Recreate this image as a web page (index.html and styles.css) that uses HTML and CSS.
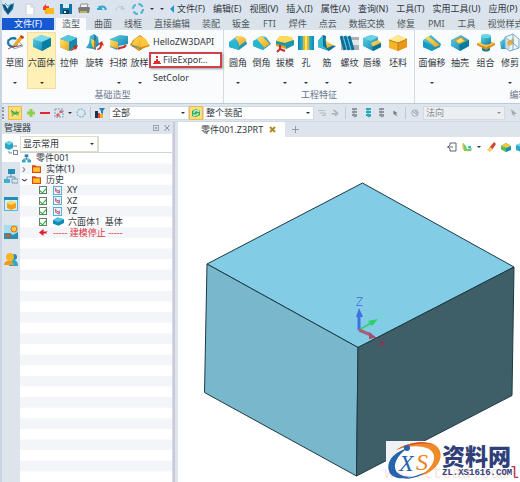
FILE: index.html
```html
<!DOCTYPE html>
<html lang="zh-CN">
<head>
<meta charset="utf-8">
<title>零件001.Z3PRT</title>
<link rel="stylesheet" href="styles.css">
</head>
<body>
<svg class="defs" aria-hidden="true">
  <defs>
    <linearGradient id="teal" x1="0" y1="0" x2="1" y2="1"><stop offset="0" stop-color="#5fd0e6"/><stop offset="1" stop-color="#0a7fa8"/></linearGradient>
    <linearGradient id="gold" x1="0" y1="0" x2="1" y2="1"><stop offset="0" stop-color="#ffe46a"/><stop offset="1" stop-color="#f0a019"/></linearGradient>
    <linearGradient id="bars" x1="0" x2="1"><stop offset="0" stop-color="#0a86b4"/><stop offset=".5" stop-color="#41d0ea"/><stop offset="1" stop-color="#0a86b4"/></linearGradient>
    <symbol id="plane" viewBox="0 0 10 10"><rect x=".5" y=".5" width="9" height="9" fill="#e8f7fd" stroke="#46a9d2"/><path d="M3 2v4l4 2V4M3 4l4 2" fill="none" stroke="#c0435a"/></symbol>
    <symbol id="folder" viewBox="0 0 8 8"><path d="M0 1h3l1 1h4v6H0z" fill="#d8481e"/><path d="M1 3h6v4H1z" fill="#ffc323"/></symbol>
    <symbol id="stack" viewBox="0 0 8 10"><path d="M1 1h5M1 4h5M1 7h5" stroke="currentColor" stroke-width="2"/><path d="M3 1v8l3-1" fill="none" stroke="currentColor"/></symbol>
  </defs>
</svg>
<div class="app">
  <header class="titlebar">
    <div class="quick">
      <svg class="logo" viewBox="0 0 12 14"><path d="M0 2l3 1 2 4 3-4 4-2-1 6-5 6-4-5z" fill="#1976a2"/><path d="M2 3l4 7 4-7" fill="none" stroke="#134c70" stroke-width="2"/><path d="M3 1l3 3 3-2" fill="none" stroke="#35b5d7"/></svg>
      <button aria-label="新建"><svg viewBox="0 0 12 12"><path d="M2 1h5l3 3v8H2z" fill="#fff" stroke="#c5ccd4"/><path d="M7 1v3h3" fill="none" stroke="#c5ccd4"/></svg></button>
      <button aria-label="打开"><svg viewBox="0 0 12 12"><path d="M2 4h4l1 1h5v6H3z" fill="#ffb81f"/><path d="M1 7V4l3-3v2h3v2H4v2z" fill="#e9471c"/></svg></button>
      <button aria-label="保存"><svg viewBox="0 0 12 12"><path d="M0 1h12v10H0z" fill="#1274a4"/><path d="M3 1h6v4H3z" fill="#d7f0f8"/><path d="M3 7h6v4H3z" fill="#103f5b"/><path d="M4 8h2v2H4z" fill="#d7f0f8"/></svg></button>
      <button aria-label="打印"><svg viewBox="0 0 12 12"><path d="M3 1h7L9 5H2z" fill="#f2f2ee" stroke="#8b8e8e"/><path d="M0 5l2-1h9l1 1-1 5H1z" fill="#777a78"/><path d="M2 8h7v2H2z" fill="#c4b25a"/></svg></button>
      <button aria-label="撤销"><svg viewBox="0 0 12 12"><path d="M1 6h4L3 3M2 6c3-4 7-3 8 1" fill="none" stroke="#2fa7cf" stroke-width="2"/></svg></button>
      <button aria-label="重做"><svg viewBox="0 0 12 12"><path d="M11 6H7l2-3m1 3C7 2 3 3 2 7" fill="none" stroke="#b6c3cc" stroke-width="1"/></svg></button>
      <button aria-label="刷新"><svg viewBox="0 0 12 12"><circle cx="6" cy="6" r="5" fill="none" stroke="#4bb2d6" stroke-width="2" stroke-dasharray="5 2.8"/></svg></button>
      <i class="caret"></i><i class="caret"></i>
      <svg class="back" viewBox="0 0 4 8"><path d="M4 0v8L0 4z" fill="#1d9bd1"/></svg>
    </div>
    <nav class="menus" aria-label="菜单">
      <button>文件(F)</button><button>编辑(E)</button><button>视图(V)</button><button>插入(I)</button><button>属性(A)</button><button>查询(N)</button><button>工具(T)</button><button>实用工具(U)</button><button>应用(P)</button>
    </nav>
  </header>
  <nav class="tabs" aria-label="功能区">
    <button class="file">文件(F)</button><button class="active">造型</button><button>曲面</button><button>线框</button><button>直接编辑</button><button>装配</button><button>钣金</button><button class="latin">FTI</button><button>焊件</button><button>点云</button><button>数据交换</button><button>修复</button><button class="latin">PMI</button><button>工具</button><button>视觉样式</button>
  </nav>
  <section class="ribbon">
    <div class="group shape">
      <div class="tools">
        <button><svg viewBox="0 0 20 20"><path d="M2 7l8-3 8 9-9 3z" fill="#e8f4fa" stroke="#8ab6cd"/><path d="M11 6C5 3 0 10 5 13c4 2 9-2 6-4" fill="none" stroke="#1675a5" stroke-width="2"/><path d="M3 16c4-3 10-2 14-4" fill="none" stroke="#c44537"/><path d="M8 12l8-10 3 2-8 9z" fill="#f5a81c"/><path d="M16 2l3 2-1 2-3-2z" fill="#c73628"/></svg><span>草图</span><i></i></button>
        <button class="picked"><svg viewBox="0 0 20 20"><path d="M1 6l8-4 10 3v8l-9 5-9-4z" fill="url(#teal)"/><path d="M1 6l8-4 10 3-9 4z" fill="#79dcee"/><path d="M10 9l9-4v8l-9 5z" fill="#087ea5"/></svg><span>六面体</span><i></i></button>
        <button><svg viewBox="0 0 20 20"><path d="M1 6l8-4 9 3v8l-8 5-9-4z" fill="#1289ae"/><path d="M1 6l8-4 9 3-8 4z" fill="#54c8dc"/><path d="M1 6l9 3v9l-9-4z" fill="url(#gold)"/><path d="M11 17l4-2-1-2 5-1-2 5-1-1-4 2z" fill="#c92c27"/></svg><span>拉伸</span><i class="none"></i></button>
        <button><svg viewBox="0 0 20 20"><path d="M5 3l4-2 4 3 1 8-5 4-8-1 3-5z" fill="url(#teal)"/><path d="M6 6l5 2v9l-4-4z" fill="url(#gold)"/><path d="M10 2v15" stroke="#225475"/><path d="M12 17c4 0 5-3 5-5l2 1-2-5-4 3 2 1c0 2-1 3-3 4z" fill="#d33126"/></svg><span>旋转</span><i class="none"></i></button>
        <button><svg viewBox="0 0 20 20"><path d="M1 6l10-4 8 1v8l-9 2-2 4-7-3z" fill="url(#teal)"/><path d="M1 7l8 2v7l-8-3z" fill="url(#gold)"/><path d="M9 16c3-3 6 0 8-4" fill="none" stroke="#c92c27" stroke-width="2"/></svg><span>扫掠</span><i></i></button>
        <button><svg viewBox="0 0 20 20"><path d="M0 12l3-5 7-5 5 4 5 7-6 2-5 3z" fill="#de8e16"/><path d="M2 11l3-5 5-3 3 6-4 7z" fill="url(#gold)"/><path d="M10 4c6 0 7 4 9 8l-8 2z" fill="#ffc73b"/><path d="M2 13l6 1 3 3" fill="none" stroke="#3192a8"/></svg><span>放样</span><i></i></button>
      </div>
      <div class="commands"><button>HelloZW3DAPI</button><button class="marked"><svg viewBox="0 0 8 8"><path d="M3 0h2v2H3zM3 3h2v2h2v2H1V5h2zM0 7h8v1H0z" fill="#d9312d"/></svg>FileExpor...</button><button>SetColor</button></div>
      <h2>基础造型</h2>
    </div>
    <div class="group feature">
      <div class="tools">
        <button><svg viewBox="0 0 20 20"><path d="M1 9l8-6 8 2 2 6-8 6-10-3z" fill="url(#teal)"/><path d="M7 5l3-2c5 0 8 2 8 5l-7 5c0-4-2-6-4-8z" fill="url(#gold)"/><path d="M1 9c6-2 10 1 10 8L1 14z" fill="#28b6cf"/></svg><span>圆角</span><i></i></button>
        <button><svg viewBox="0 0 20 20"><path d="M1 8l8-5 5 1 5 7-8 6-10-4z" fill="url(#teal)"/><path d="M5 6l5-3 8 8-6 4z" fill="url(#gold)"/><path d="M1 8l4-1 7 7-1 3-10-4z" fill="#28b6cf"/></svg><span>倒角</span><i class="none"></i></button>
        <button><svg viewBox="0 0 20 20"><path d="M1 8l4-5 12 1 2 8-8 4-10-3z" fill="#e99b18"/><path d="M1 8l4-5 12 1 1 3-8 3z" fill="#ffdc57"/><path d="M10 10l9-3v5l-8 4z" fill="#1596b5"/><path d="M1 8l9 2v3l-9-2z" fill="#1596b5"/><path d="M5 12v4l-3 3m3-3l5 2" fill="none" stroke="#c92c27" stroke-width="2"/></svg><span>拔模</span><i></i></button>
        <button><svg viewBox="0 0 20 20"><path d="M2 3h16v14H2z" fill="url(#bars)"/><path d="M7 3h6v14H7z" fill="#edb51f"/><path d="M9 3h2v14H9z" fill="#ffea61"/></svg><span>孔</span><i></i></button>
        <button><svg viewBox="0 0 20 20"><path d="M1 8l5-6 3 1v8l10 2-7 5-11-4z" fill="#0b7499"/><path d="M1 8l5-6v11l5 4-10-3z" fill="#35bcd2"/><path d="M8 4c1 5 5 7 9 8l-7 3z" fill="url(#gold)"/></svg><span>筋</span><i></i></button>
        <button><svg viewBox="0 0 20 20"><path d="M1 4h18v13H1z" fill="#a7b1b6"/><path d="M10 7h9v5h-9z" fill="#e3e8ea"/><path d="M1 3l4 14M5 3l4 14M9 3l4 14" stroke="#0c6e9a" stroke-width="3"/><path d="M3 3l4 14M7 3l4 14" stroke="#4cc5e0"/></svg><span>螺纹</span><i></i></button>
        <button><svg viewBox="0 0 20 20"><path d="M1 5l8-3 7 2v4l3 2v4l-8 4-10-5z" fill="url(#teal)"/><path d="M1 5l8-3 7 2-7 4z" fill="#67d3e3"/><path d="M9 10l7-3 3 3-8 4z" fill="url(#gold)"/><path d="M10 14l9-4v4l-8 4z" fill="#087295"/></svg><span>唇缘</span><i class="none"></i></button>
        <button><svg viewBox="0 0 20 20"><path d="M1 7l9-5 9 4v8l-9 4-9-3z" fill="#f4b528"/><path d="M1 7l9-5 9 4-9 4z" fill="#ffe98d"/><path d="M10 10l9-4v8l-9 4z" fill="#e9961b"/><path d="M1 7l9 3 9-4M10 10v8" fill="none" stroke="#c77b12"/></svg><span>坯料</span><i class="none"></i></button>
      </div>
      <h2>工程特征</h2>
    </div>
    <div class="group edit">
      <div class="tools">
        <button><svg viewBox="0 0 20 20"><path d="M1 7l8-5 10 9-1 3-8 4-9-4z" fill="url(#teal)"/><path d="M3 5l3-2 12 9-5 2z" fill="url(#gold)"/><path d="M1 8l11 6-2 4-9-4z" fill="#159ac1"/></svg><span>面偏移</span><i></i></button>
        <button><svg viewBox="0 0 20 20"><path d="M1 7l10-5 8 5v6l-9 5-9-5z" fill="url(#teal)"/><path d="M4 7l7-3 5 4-7 3z" fill="#e6991b"/><path d="M6 8l5-3 3 3-5 2z" fill="#ffe06c"/><path d="M9 12l10-5v6l-9 5z" fill="#087ba1"/></svg><span>抽壳</span><i class="none"></i></button>
        <button><svg viewBox="0 0 20 20"><path d="M6 11h8v6c-2 2-6 2-8 0z" fill="#087ba1"/><path d="M1 10l9-3 9 3-9 5z" fill="url(#gold)"/><path d="M1 10l9 5 9-5v2l-9 5-9-5z" fill="#dc8918"/><path d="M5 3h10v7c-2 2-8 2-10 0z" fill="url(#teal)"/><ellipse cx="10" cy="3" rx="5" ry="2" fill="#67d3e3"/></svg><span>组合</span><i class="none"></i></button>
        <button><svg viewBox="0 0 20 20"><path d="M0 9l5-4 5 3v8H1z" fill="url(#teal)"/><path d="M5 4l8-3 6 5v9l-9 3-5-3z" fill="#e6f3fa" fill-opacity=".8" stroke="#7babca"/><path d="M7 9l7-4v6l-6 2z" fill="#efad37"/><path d="M13 1v16M5 4l14 11" stroke="#88a7bd"/></svg><span>修剪</span><i></i></button>
      </div>
      <h2>编辑</h2>
    </div>
  </section>
  <section class="toolbar" aria-label="选择工具">
    <span class="grip"></span>
    <button class="hot" aria-label="拾取"><svg viewBox="0 0 10 10"><path d="M1 2l4 2 2-2v3l3-2-2 5-3-2-3 3z" fill="#78c63b"/><path d="M1 2l4 4 3-2" fill="none" stroke="#248d82"/></svg></button>
    <button aria-label="添加"><svg viewBox="0 0 10 10"><path d="M5 1v8M1 5h8" stroke="#8fd04a" stroke-width="3"/></svg></button>
    <button aria-label="移除"><svg viewBox="0 0 10 10"><path d="M0 5h10" stroke="#df2830" stroke-width="2"/></svg></button>
    <button aria-label="框选"><svg viewBox="0 0 10 10"><rect x="1" y="1" width="8" height="8" fill="none" stroke="#6e9fb8" stroke-dasharray="2 1"/><path d="M2 7h4M4 5v4M7 2v3M5 4h4" stroke="#d83f4b"/></svg></button>
    <i class="caret"></i>
    <button aria-label="圈选"><svg viewBox="0 0 10 10"><circle cx="5" cy="5" r="4" fill="none" stroke="#50a9cb" stroke-dasharray="2 1"/></svg></button>
    <span class="rule"></span>
    <button aria-label="过滤"><svg viewBox="0 0 10 10"><path d="M0 3h3v7H0z" fill="#16344d"/><path d="M3 5h2v5H3z" fill="#e44236"/><path d="M5 6h3v4H5z" fill="#f6ab21"/><path d="M4 0h6L8 3v3L6 5V3z" fill="#2382b8"/></svg></button>
    <label class="drop all"><select aria-label="过滤器"><option>全部</option></select></label>
    <button class="hot" aria-label="范围"><svg viewBox="0 0 10 10"><path d="M1 3l4-2 4 2v4L5 9 1 8z" fill="#35aa55"/><path d="M3 5c0-3 4-3 5-1M7 5c0 3-4 2-5 2" fill="none" stroke="#b8f2e1" stroke-width="1.5"/></svg></button>
    <label class="drop scope"><select aria-label="选择范围"><option>整个装配</option></select></label>
    <div class="dim">
      <svg viewBox="0 0 10 10"><path d="M0 2h9M2 5h7M5 8h4V5" fill="none" stroke="#a8b0b8"/></svg>
      <svg viewBox="0 0 10 10"><path d="M3 1l5 4-2 1v3M1 6h8" fill="none" stroke="#a8b0b8" stroke-width="2"/></svg>
      <span class="rule"></span>
      <svg viewBox="0 0 8 10"><use href="#stack"/></svg><svg class="lit" viewBox="0 0 8 10"><use href="#stack"/></svg><svg viewBox="0 0 8 10"><use href="#stack"/></svg>
      <svg viewBox="0 0 10 10"><path d="M3 2l5 3-2 1 2 3-2-1-3-2z" fill="#777f87"/></svg>
      <span class="rule"></span>
      <svg viewBox="0 0 10 10"><circle cx="5" cy="5" r="4" fill="none" stroke="#9ba4ab"/><path d="M2 3l6 4M5 2l3 3" stroke="#7e878f"/></svg>
    </div>
    <label class="drop off"><select aria-label="方向" disabled><option>法向</option></select></label>
    <svg class="tail" viewBox="0 0 10 10"><path d="M2 1l6 5-3 0 1 3-3-3z" fill="#a3abb3"/></svg>
  </section>
  <main class="work">
    <aside class="manager">
      <header><h1>管理器</h1><button aria-label="停靠"><svg viewBox="0 0 6 6"><rect x=".5" y=".5" width="5" height="5" fill="none" stroke="#9aa6b1"/><path d="M2 2h2v2H2z" fill="#9aa6b1"/></svg></button><button aria-label="关闭"><svg viewBox="0 0 6 6"><path d="M1 1l4 4M5 1L1 5M0 0h2M4 0h2M0 6h2M4 6h2" stroke="#8793a0"/></svg></button></header>
      <div class="body">
        <nav class="rail" aria-label="面板">
          <button class="on" aria-label="历史"><svg viewBox="0 0 14 16"><path d="M1 3l4-2 4 2v5L5 10 1 8z" fill="#27a7c8"/><path d="M1 3l4-2 4 2-4 2z" fill="#75d2e6"/><path d="M9 6h4M5 11v2h3" fill="none" stroke="#6d8b9d"/><rect x="9.500" y="10.500" width="4" height="4" fill="none" stroke="#6d8b9d"/></svg></button>
          <button aria-label="装配"><svg viewBox="0 0 14 16"><path d="M4 1h7v5H4z" fill="#208fba"/><path d="M7 6v3M3 11V9h8v2" fill="none" stroke="#5a8da8"/><path d="M0 11h6v4H0z" fill="#3ab2ce"/><path d="M8 11h6v4H8z" fill="#d9e7ef" stroke="#77a1b6"/></svg></button>
          <button aria-label="视图"><svg viewBox="0 0 14 16"><path d="M.5 1.500h13v13H.5z" fill="#d9eef7" stroke="#58b0d3"/><path d="M0 1h14v3H0z" fill="#1b91c0"/><path d="M3 7l4-2 5 2v5l-5 2-4-2z" fill="#f0a21d"/><path d="M3 7l4-2 5 2-5 2z" fill="#ffdc5f"/></svg></button>
          <button aria-label="视觉"><svg viewBox="0 0 14 16"><path d="M0 1h14v14H0z" fill="#a7dded"/><path d="M0 9h6l3 2 5-3v7H0z" fill="#2990b3"/><circle cx="10" cy="5" r="3" fill="#ffca36" stroke="#e06f22"/><path d="M1 11h3V9l4 3-4 2v-1H1z" fill="#b76531"/></svg></button>
          <button aria-label="角色"><svg viewBox="0 0 14 16"><circle cx="10" cy="5" r="3" fill="#1d8fbb"/><path d="M5 14c0-8 9-8 9 0z" fill="#2aa5cc"/><circle cx="6" cy="5" r="4" fill="#f5b629"/><path d="M0 13c0-5 9-6 10 0z" fill="#f09b1e"/></svg></button>
        </nav>
        <div class="panel">
          <div class="finder"><label class="drop"><select aria-label="显示"><option>显示常用</option></select></label><input type="text" aria-label="搜索"></div>
          <ul class="tree">
            <li><svg viewBox="0 0 10 9"><path d="M3 0h4v3H3z" fill="#1987ad"/><path d="M5 3v3M2 6V5h6v1" fill="none" stroke="#417f9c"/><path d="M0 6h4v3H0zM6 6h4v3H6z" fill="#31a7c7"/></svg>零件001</li>
            <li><b class="fold">›</b><svg viewBox="0 0 8 8"><use href="#folder"/></svg>实体(1)</li>
            <li><b class="fold open">›</b><svg viewBox="0 0 8 8"><use href="#folder"/></svg>历史</li>
            <li class="leaf"><label><input type="checkbox" checked><svg viewBox="0 0 10 10"><use href="#plane"/></svg>XY</label></li>
            <li class="leaf"><label><input type="checkbox" checked><svg viewBox="0 0 10 10"><use href="#plane"/></svg>XZ</label></li>
            <li class="leaf"><label><input type="checkbox" checked><svg viewBox="0 0 10 10"><use href="#plane"/></svg>YZ</label></li>
            <li class="leaf"><label><input type="checkbox" checked><svg class="wide" viewBox="0 0 12 9"><path d="M0 3l5-3 7 2v4L6 9 0 7z" fill="#1589b5"/><path d="M0 3l5-3 7 2-6 3z" fill="#4fc3e1"/></svg>六面体1&nbsp; 基体</label></li>
            <li class="leaf stop"><svg viewBox="0 0 10 8"><path d="M0 4l5-4v3h5l-2 1 1 1H5v3z" fill="#dd1b26"/></svg>----- 建模停止 -----</li>
          </ul>
        </div>
      </div>
    </aside>
    <section class="document">
      <div class="doctabs"><button class="doc">零件001.Z3PRT <svg viewBox="0 0 7 7"><path d="M1 1l5 5M6 1L1 6" stroke="#b28a1d" stroke-width="2"/></svg></button><button class="plus" aria-label="新标签"><svg viewBox="0 0 7 7"><path d="M3.500 0v7M0 3.500h7" stroke="#929ba4"/></svg></button></div>
      <div class="stage">
        <svg class="model" viewBox="0 0 342 345" role="img" aria-label="六面体">
          <g stroke="#1d3945" stroke-linejoin="round"><path d="M184.500 46L336 130 180 210.500 29 127z" fill="#82cce6"/><path d="M29 127l151 83.500L178.500 339 26.500 255.500z" fill="#79b8cc"/><path d="M180 210.500L336 130l-2 128.500L178.500 339z" fill="#3f5f68"/></g>
          <path d="M181 193V180" stroke="#416fe0" stroke-width="3"/><path d="M178 180l3-9 4 9z" fill="#416fe0"/><path d="M178.500 160.500h6l-6 8h6" fill="none" stroke="#4a7ee0"/>
          <path d="M181 193l12-7" stroke="#31cf71" stroke-width="2"/><path d="M190 184l10-2-6 7z" fill="#2bd264"/><path d="M200 176l3 3 4-4m-4 4l1 4" stroke="#62dcc0" fill="none"/>
          <path d="M181 193l12 5" stroke="#a65d78" stroke-width="3"/><path d="M191 195l8 6-8 1z" fill="#a2506c"/><path d="M201 202l6 8m0-8l-6 8" stroke="#9f2e40"/>
        </svg>
        <div class="viewbar">
          <button aria-label="退出"><svg viewBox="0 0 10 10"><path d="M3 1h6v8H3V7M3 3V1M0 5h6M3 3L1 5l2 2" fill="none" stroke="#5d656b"/></svg></button>
          <button aria-label="视向"><svg viewBox="0 0 10 10"><path d="M1 1l3 3 1 3 5-1-1 3H2z" fill="#67cf68"/><path d="M1 1v6l5 2" fill="none" stroke="#e8b72b"/><path d="M6 4h3v2H6z" fill="#35b8d2"/></svg></button>
          <i class="caret"></i>
          <button aria-label="样式"><svg viewBox="0 0 10 10"><path d="M8 0l2 2-4 6-3-2z" fill="#d84336"/><path d="M4 5l3 2-3 3-3-2z" fill="#f6d258"/></svg></button>
          <button aria-label="着色"><svg viewBox="0 0 10 10"><path d="M0 4l5-3 5 3v4l-5 2-5-3z" fill="#188eb3"/><path d="M0 4l5-3 5 3-5 2z" fill="#f5c831"/><path d="M0 4l5 2v4L0 7z" fill="#55bd58"/></svg></button>
          <button aria-label="线框"><svg viewBox="0 0 10 10"><path d="M0 3l5-2 5 2v5l-5 2-5-2z" fill="#2ca7cf"/><path d="M0 3l5-2 5 2-5 2z" fill="#7bd9ef"/></svg></button>
        </div>
        <div class="watermark">
          <em>www.ttead.com<b>l</b></em>
          <svg viewBox="0 0 56 41"><ellipse cx="29" cy="20" rx="23" ry="15" fill="#fff"/><path d="M22 7C8 11 0 20 3 30c2 7 12 9 23 6-9 0-16-3-17-9-1-7 5-15 13-20z" fill="#2464ad"/><path d="M17 38c10 0 18-3 23-7-7 3-14 5-23 7z" fill="#2464ad"/><path d="M10 9C22 1 40-1 49 4c9 6 7 18-4 26-3 2-7 4-11 5 9-6 15-13 14-20-1-10-19-13-38-6z" fill="#ef8a2b"/><path d="M10 9C22 1 40-1 49 4c-12-3-26-1-39 5z" fill="#d9482b"/><circle cx="21" cy="7" r="3" fill="#2464ad"/><text x="13" y="30" class="x">X</text><text x="30" y="29" class="s">S</text></svg>
          <div><strong>资料网</strong><span>ZL.XS1616.COM</span></div>
        </div>
      </div>
    </section>
  </main>
</div>
</body>
</html>
```
FILE: styles.css
```css
* { box-sizing: border-box; }
body { margin: 0; background: #dde4ec; color: #30363c; font: 9px/12px "Noto Sans", "Noto Sans CJK SC", sans-serif; }
button, input, select { margin: 0; padding: 0; border: 0; background: none; color: inherit; font: inherit; border-radius: 0; white-space: nowrap; }
h1, h2, ul { margin: 0; padding: 0; font: inherit; list-style: none; }
svg { display: block; flex: none; }
.defs { position: absolute; width: 0; height: 0; }
.app { display: flex; flex-direction: column; height: 100vh; overflow: hidden; border-left: 2px solid #c8d4df; }
.caret { flex: none; width: 4px; border: 2px solid transparent; border-top-color: #333; border-bottom: 0; }

.titlebar { display: flex; align-items: center; height: 18px; flex: none; background: #dbe4ee; }
.quick { display: flex; align-items: center; gap: 6px; width: 175px; flex: none; }
.quick svg { width: 12px; height: 12px; }
.quick .logo { height: 14px; margin-right: 4px; }
.quick .back { width: 4px; height: 8px; }
.menus { display: flex; gap: 8px; }

.tabs { display: flex; height: 12px; flex: none; background: #dbe3ea; color: #50585f; }
.tabs button { padding: 0 6px; flex: none; }
.tabs .latin { padding: 0 7px; }
.tabs .file { width: 52px; background: #1559d3; color: #fff; }
.tabs .active { margin: 0 2px; background: #f8fafc; }

.ribbon { display: flex; flex: none; height: 74px; background: #fafbfd; border-bottom: 1px solid #bfcbd7; overflow: hidden; }
.group { display: grid; grid-template: 59px 14px / 1fr; flex: none; border-right: 1px solid #d3dbe3; }
.tools { display: grid; padding-top: 2px; }
.tools button { display: flex; flex-direction: column; align-items: center; }
.tools svg { width: 20px; height: 20px; margin-top: 1px; }
.tools span { margin-top: 4px; }
.tools i { margin-top: 13px; border: 2px solid transparent; border-top-color: #333; border-bottom: 0; }
.tools .none { visibility: hidden; }
.tools .picked { background: #fff0b8; outline: 1px solid #f3dda0; outline-offset: -1px; }
.group h2 { text-align: center; color: #68748c; }
.shape { width: 222px; grid-template-columns: 147px 1fr; }
.shape h2 { grid-column: 1 / 3; }
.shape .tools { grid-template-columns: 25px 29px 26px 25px 23px 19px; }
.feature { width: 191px; }
.feature .tools { padding-left: 2px; grid-template-columns: 24px 23px 24px 18px 24px 21px 24px 28px; }
.edit { width: 208px; }
.edit .tools { padding-left: 2px; grid-template-columns: 30px 26px 25px 24px; }
.commands { display: flex; flex-direction: column; align-items: start; gap: 1px; padding-top: 3px; }
.commands button { height: 18px; padding-left: 4px; }
.commands .marked { display: flex; align-items: center; gap: 2px; width: 73px; height: 16px; padding-left: 2px; background: #fff; border: 2px solid #cf4249; box-shadow: 1px 1px 2px #9a9a9a; }
.marked svg { width: 8px; height: 8px; }

.toolbar { display: flex; align-items: center; gap: 4px; flex: none; height: 18px; background: #dfe5ec; border-bottom: 1px solid #d1dae3; overflow: hidden; }
.toolbar svg { width: 10px; height: 10px; }
.grip { width: 2px; height: 12px; border-left: 2px dotted #8c98a4; }
.hot { display: grid; place-items: center; width: 14px; height: 14px; flex: none; background: #ffdd78; border: 1px solid #efb94e; }
.rule { width: 1px; height: 12px; flex: none; background: #bec8d2; }
.drop { position: relative; display: block; flex: none; height: 14px; background: #fff; border: 1px solid #d2dae2; }
.drop select { display: block; width: 100%; height: 100%; padding-left: 2px; appearance: none; opacity: 1; }
.drop::after { content: ""; position: absolute; right: 3px; top: 5px; border: 2px solid transparent; border-top-color: #333; border-bottom: 0; pointer-events: none; }
.drop.all { width: 80px; margin-right: -4px; }
.drop.scope { width: 111px; margin-left: -4px; }
.drop.off { width: 82px; background: #eceff2; color: #858b91; }
.drop.off::after { border-top-color: #8b9299; }
.dim { display: flex; align-items: center; justify-content: space-between; width: 101px; flex: none; color: #8e979f; }
.dim svg { width: 8px; }
.dim .lit { color: #27a9bd; }

.work { display: flex; flex: 1; min-height: 0; }
.manager { display: flex; flex-direction: column; width: 173px; flex: none; border-right: 2px solid #c8cadc; }
.manager header { display: flex; align-items: center; gap: 5px; height: 12px; padding: 0 3px 0 2px; }
.manager header svg { width: 6px; height: 6px; }
.manager h1 { flex: 1; }
.body { display: flex; flex: 1; min-height: 0; }
.rail { width: 18px; flex: none; }
.rail button { display: grid; place-items: center; width: 18px; height: 28px; }
.rail svg { width: 14px; height: 16px; }
.rail .on { background: #fff; }
.panel { display: flex; flex-direction: column; flex: 1; min-width: 0; background: #fff; border-right: 1px solid #d7dae6; }
.finder { display: flex; flex: none; height: 19px; padding-top: 2px; border-bottom: 1px solid #cbd3dc; }
.finder .drop { width: 78px; height: 16px; border-color: #e3ddc4; }
.finder .drop::after { top: 6px; }
.finder input { flex: 1; min-width: 0; background: #fff; border-left: 1px solid #d5dce3; }
.tree { display: grid; grid-template-rows: repeat(31, 1fr); flex: 1; min-height: 0; background: linear-gradient(#fff 50%, #f4f5f8 50%) 0 0 / 100% calc(200% / 31); }
.tree li, .tree label { display: flex; align-items: center; min-height: 0; height: 100%; line-height: 10px; white-space: pre; }
.tree li { padding-left: 2px; }
.tree svg { width: 9px; height: 9px; margin-right: 5px; }
.tree .wide { width: 11px; margin-right: 4px; }
.fold { width: 10px; font-size: 12px; font-weight: 400; color: #737b82; }
.fold.open { display: grid; place-items: center; width: 6px; margin-right: 4px; color: #222; transform: rotate(90deg); }
.tree .leaf { padding-left: 19px; }
.tree input { display: grid; place-items: center; appearance: none; width: 8px; height: 8px; margin-right: 6px; background: #fff; border: 1px solid #667a6d; }
.tree input:checked::after { content: ""; width: 3px; height: 5px; border: solid #15b22b; border-width: 0 1px 1px 0; transform: rotate(40deg); }
.tree .stop { color: #e03440; }

.document { display: flex; flex-direction: column; flex: 1; min-width: 0; padding-left: 3px; }
.doctabs { display: flex; flex: none; height: 15px; }
.doctabs svg { width: 7px; height: 7px; }
.doc { display: flex; align-items: center; gap: 6px; width: 107px; padding-left: 23px; background: #fff; }
.plus { width: 22px; padding-left: 7px; }
.stage { position: relative; flex: 1; min-height: 0; background: #fff; overflow: hidden; }
.model { width: 100%; height: 100%; }
.viewbar { position: absolute; top: 5px; right: -6px; display: flex; align-items: center; gap: 5px; }
.viewbar svg { width: 10px; height: 10px; }
.watermark { position: absolute; right: 1px; bottom: 0; display: flex; width: 133px; height: 41px; background: rgb(255 255 255 / 92%); }
.watermark svg { position: relative; width: 56px; height: 41px; }
.watermark div { position: relative; display: flex; flex-direction: column; }
.watermark strong { font: 900 23px/28px "Noto Sans CJK SC", sans-serif; color: #303f78; }
.watermark span { font: bold 9px/8px "Liberation Mono", monospace; color: #303f78; }
.watermark em { position: absolute; right: 0; bottom: 0; font: 16px/16px "Liberation Mono", monospace; color: rgb(214 60 80 / 18%); }
.watermark em b { font-weight: 400; color: #b23350; }
.watermark .x { font: italic 24px "Liberation Serif", serif; fill: #2464ad; }
.watermark .s { font: italic 24px "Liberation Serif", serif; fill: #ef7e25; }
```
